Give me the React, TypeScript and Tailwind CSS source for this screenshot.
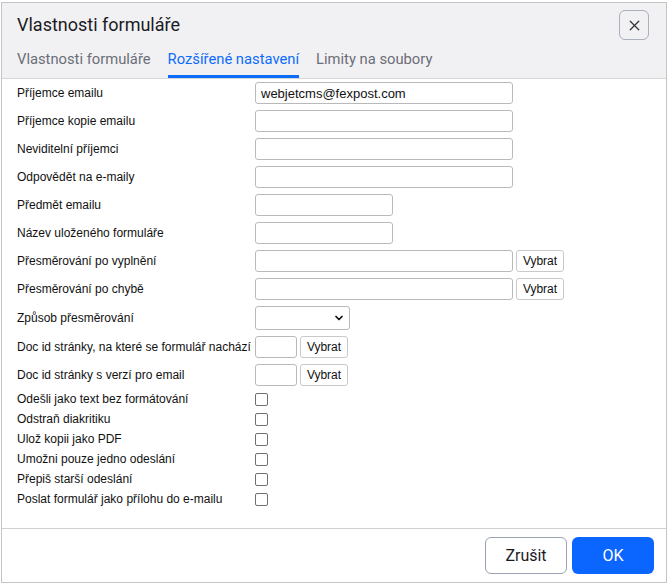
import { X, ChevronDown } from "lucide-react";

const sans = { fontFamily: 'Roboto, "Noto Sans", sans-serif' };
const arial = { fontFamily: '"Liberation Sans", Arial, sans-serif' };

type Row = { label: string; kind: "long" | "short" | "pick" | "select" | "doc" };

const rows: Row[] = [
  { label: "Příjemce emailu", kind: "long" },
  { label: "Příjemce kopie emailu", kind: "long" },
  { label: "Neviditelní příjemci", kind: "long" },
  { label: "Odpovědět na e-maily", kind: "long" },
  { label: "Předmět emailu", kind: "short" },
  { label: "Název uloženého formuláře", kind: "short" },
  { label: "Přesměrování po vyplnění", kind: "pick" },
  { label: "Přesměrování po chybě", kind: "pick" },
  { label: "Způsob přesměrování", kind: "select" },
  { label: "Doc id stránky, na které se formulář nachází", kind: "doc" },
  { label: "Doc id stránky s verzí pro email", kind: "doc" },
];

const checks = [
  "Odešli jako text bez formátování",
  "Odstraň diakritiku",
  "Ulož kopii jako PDF",
  "Umožni pouze jedno odeslání",
  "Přepiš starší odeslání",
  "Poslat formulář jako přílohu do e-mailu",
];

const inputCls =
  "h-[22px] border border-[#b9b9b9] rounded-[3px] bg-white px-[5px] text-[13px] text-[#111] outline-none";

function PickButton() {
  return (
    <button className="h-[22px] w-[48px] border border-[#c9c9c9] rounded-[3px] bg-white text-[12px] text-[#111]">
      Vybrat
    </button>
  );
}

function Field({ row, index }: { row: Row; index: number }) {
  if (row.kind === "long")
    return (
      <input
        className={`${inputCls} w-[258px]`}
        defaultValue={index === 0 ? "webjetcms@fexpost.com" : ""}
      />
    );
  if (row.kind === "short") return <input className={`${inputCls} w-[138px]`} />;
  if (row.kind === "pick")
    return (
      <div className="flex gap-[3px]">
        <input className={`${inputCls} w-[258px]`} />
        <PickButton />
      </div>
    );
  if (row.kind === "doc")
    return (
      <div className="flex gap-[3px]">
        <input className={`${inputCls} w-[42px]`} />
        <PickButton />
      </div>
    );
  return (
    <div className="relative h-[24px] w-[95px] border border-[#b9b9b9] rounded-[3px] bg-white">
      <ChevronDown size={12} strokeWidth={3.5} className="absolute right-[4px] top-[5px] text-[#111]" />
    </div>
  );
}

export default function App() {
  return (
    <div className="w-[668px] h-[584px] bg-white pt-[2px] pl-[1px]">
      <div className="flex flex-col w-[666px] h-[581px] border border-[#c4c4c4] bg-white">
        {/* Header */}
        <div className="bg-[#f1f1f4] border-b border-[#d6d6d6] px-[15px]" style={sans}>
          <div className="flex items-center justify-between h-[44px]">
            <h1 className="text-[18px] text-[#1b1b1f] leading-none">Vlastnosti formuláře</h1>
            <button className="w-[30px] h-[30px] mr-[2px] flex items-center justify-center border border-[#a9afbd] rounded-[6px] text-[#333]">
              <X size={17} strokeWidth={1.75} />
            </button>
          </div>
          <div className="flex gap-[17px] h-[31px] text-[14.75px]">
            <span className="flex items-center pb-[4px] border-b-[3px] border-transparent text-[#6b6e76]">
              Vlastnosti formuláře
            </span>
            <span className="flex items-center pb-[4px] border-b-[3px] border-[#0b6cfb] text-[#0b6cfb]">
              Rozšířené nastavení
            </span>
            <span className="flex items-center pb-[4px] border-b-[3px] border-transparent text-[#6b6e76]">
              Limity na soubory
            </span>
          </div>
        </div>

        {/* Body */}
        <div className="flex-1 px-[15px] text-[12px] text-[#111]" style={arial}>
          {rows.map((row, i) => (
            <div
              key={row.label}
              className={`flex items-center ${row.kind === "select" ? "h-[30px]" : "h-[28px]"}`}
            >
              <span className="w-[238px]">{row.label}</span>
              <Field row={row} index={i} />
            </div>
          ))}
          {checks.map((label) => (
            <div key={label} className="flex items-center h-[20px]">
              <span className="w-[238px]">{label}</span>
              <span className="w-[13px] h-[13px] border border-[#6f6f6f] rounded-[2px] bg-white" />
            </div>
          ))}
        </div>

        {/* Footer */}
        <div className="flex justify-end items-center gap-[5px] h-[54px] border-t border-[#d0d0d0] pr-[12px]" style={sans}>
          <button className="w-[82px] h-[37px] border border-[#9aa1b2] rounded-[6px] bg-white text-[16px] text-[#1b1b1f]">
            Zrušit
          </button>
          <button className="w-[82px] h-[37px] rounded-[6px] bg-[#0b66ff] text-[16px] text-white">
            OK
          </button>
        </div>
      </div>
    </div>
  );
}
